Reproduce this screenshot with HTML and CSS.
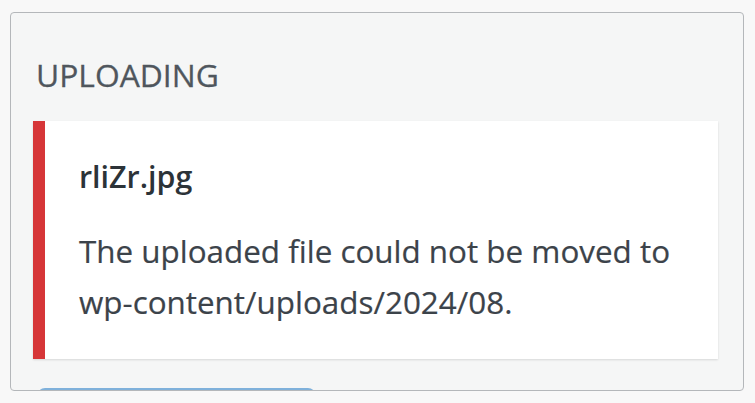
FILE: index.html
```html
<!DOCTYPE html>
<html>
<head>
<meta charset="utf-8">
<link rel="stylesheet" href="styles.css">
</head>
<body>
<div class="panel">
  <h3 class="title">UPLOADING</h3>
  <div class="notice">
    <p class="file"><strong>rliZr.jpg</strong></p>
    <p class="msg">The uploaded file could not be moved to wp-content/uploads/2024/08.</p>
  </div>
  <div class="button"></div>
</div>
</body>
</html>
```
FILE: styles.css
```css
html, body {
  margin: 0;
  padding: 0;
}
body {
  background: #f8f8f8;
  font-family: "Open Sans", "Noto Sans", sans-serif;
  color: #3c434a;
}
.panel {
  box-sizing: border-box;
  margin: 12px 0 0 10px;
  width: 734px;
  height: 379px;
  border: 1px solid #b4b7ba;
  border-radius: 4px;
  background: #f5f6f6;
  overflow: hidden;
  padding: 0 25px 0 22px;
}
.title {
  margin: 46px 0 0 3px;
  font-size: 31.8px;
  line-height: 31px;
  font-weight: 400;
  color: #4f565d;
  -webkit-text-stroke: 0.3px #4f565d;
}
.notice {
  margin-top: 31px;
  height: 238px;
  box-sizing: border-box;
  background: #fff;
  border-left: 12px solid #d63638;
  box-shadow: 0 1px 2px rgba(0, 0, 0, 0.12);
  padding: 29px 20px 0 34px;
}
.notice p {
  margin: 0;
  font-size: 31.4px;
  line-height: 51px;
}
.file {
  color: #2c3338;
}
.file strong {
  font-size: 30.4px;
  font-weight: 600;
}
.msg {
  margin-top: 23px !important;
  -webkit-text-stroke: 0.2px #3c434a;
}
.button {
  margin: 29px 0 0 4px;
  width: 275px;
  height: 40px;
  border: 2px solid #7fb1db;
  border-radius: 8px;
}
```
